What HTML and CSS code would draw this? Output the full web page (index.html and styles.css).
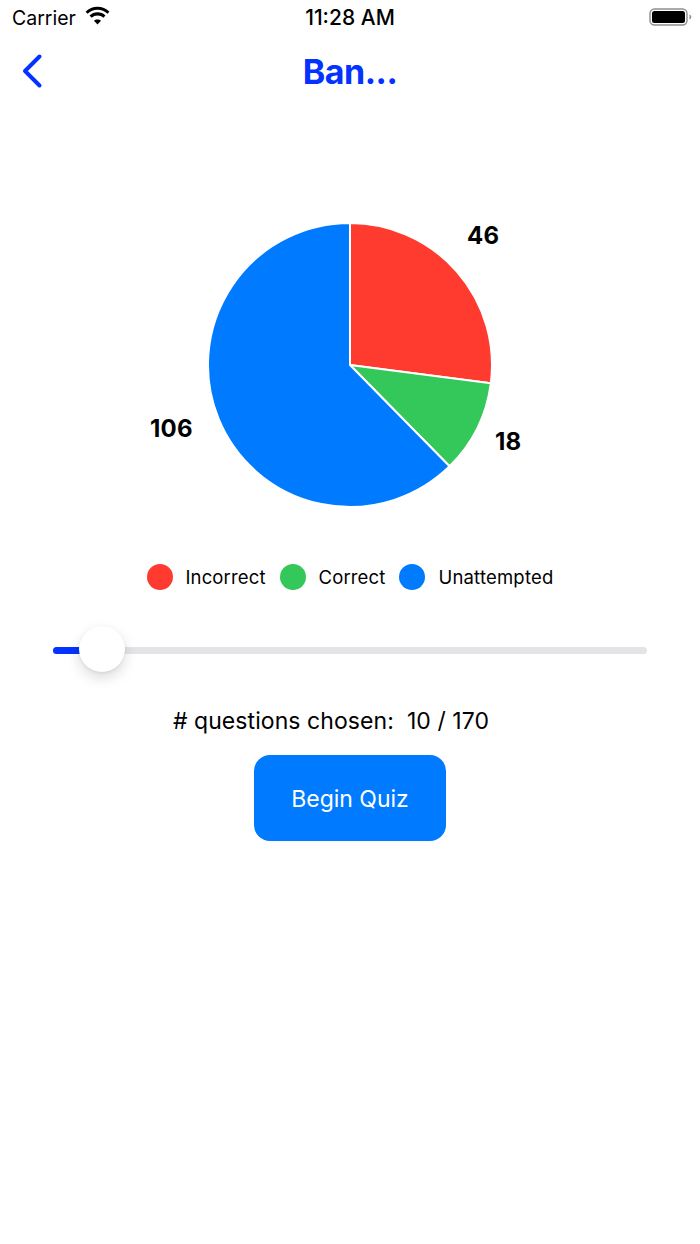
FILE: index.html
```html
<!DOCTYPE html>
<html lang="en">
<head>
<meta charset="utf-8">
<title>Quiz</title>
<link rel="stylesheet" href="styles.css">
</head>
<body>
<div class="screen">
  <header class="status">
    <div class="status-left">
      <span class="carrier">Carrier</span>
      <svg class="wifi" width="26" height="19" viewBox="0 0 26 19"><path d="M13 3.600c3.700 0 7 1.400 9.500 3.800l2-2.100A16.600 16.600 0 0 0 13 .6 16.600 16.600 0 0 0 1.500 5.300l2 2.100A13.700 13.700 0 0 1 13 3.600z"/><path d="M13 9.100c2.200 0 4.100.8 5.600 2.100l2.100-2.200A11.300 11.300 0 0 0 13 5.900c-3 0-5.700 1.200-7.700 3.100l2.100 2.200A8.400 8.400 0 0 1 13 9.100z"/><path d="M13 12.800c-1.300 0-2.500.5-3.400 1.300l3.400 3.700 3.400-3.700c-.9-.8-2.100-1.300-3.400-1.300z"/></svg>
    </div>
    <span class="clock">11:28 AM</span>
    <svg class="battery" width="44" height="20" viewBox="0 0 44 20"><rect x="1" y="2" width="37" height="16" rx="4.500" fill="none" stroke="#8e8e8e" stroke-width="1.400"/><rect x="3" y="4" width="33" height="12" rx="2.500"/><path d="M40.500 7.500c1.300.4 1.800 1.400 1.800 2.500s-.5 2.100-1.800 2.500z" fill="#8e8e8e"/></svg>
  </header>

  <nav class="navbar">
    <svg class="back" width="24" height="36" viewBox="0 0 24 36"><path d="M20.500 3.500 6 18l14.500 14.500" fill="none" stroke="#0433ff" stroke-width="4" stroke-linecap="round" stroke-linejoin="round"/></svg>
    <h1 class="title">Ban...</h1>
  </nav>

  <section class="chart">
    <svg class="pie" width="288" height="288" viewBox="-144 -144 288 288">
      <g stroke="#fff" stroke-width="2" stroke-linejoin="round">
        <path fill="#ff3b30" d="M0 0V-142A142 142 0 0 1 140.800 18.300Z"/>
        <path fill="#34c759" d="M0 0L140.800 18.300A142 142 0 0 1 99.500 101.300Z"/>
        <path fill="#007aff" d="M0 0L99.500 101.300A142 142 0 1 1 0 -142Z"/>
      </g>
    </svg>
    <span class="count count-red">46</span>
    <span class="count count-green">18</span>
    <span class="count count-blue">106</span>
  </section>

  <ul class="legend">
    <li class="legend-item"><span class="dot dot-red"></span>Incorrect</li>
    <li class="legend-item"><span class="dot dot-green"></span>Correct</li>
    <li class="legend-item"><span class="dot dot-blue"></span>Unattempted</li>
  </ul>

  <div class="slider">
    <div class="track"><div class="fill"></div></div>
    <div class="thumb"></div>
  </div>

  <p class="chosen">#&nbsp;questions chosen:&nbsp; 10 / 170</p>

  <button class="begin">Begin Quiz</button>
</div>
</body>
</html>
```
FILE: styles.css
```css
* { box-sizing: border-box; }
html, body { margin: 0; padding: 0; background: #fff; }
body { font-family: Inter, "Liberation Sans", sans-serif; color: #000; }
.screen { width: 700px; height: 1244px; display: flex; flex-direction: column; align-items: center; overflow: hidden; }

.status { width: 100%; height: 36px; display: grid; grid-template-columns: 1fr auto 1fr; align-items: center; padding: 0 7px 0 7px; }
.status-left { display: flex; align-items: center; gap: 8px; padding-left: 5px; }
.carrier { font-size: 19.500px; line-height: 36px; }
.wifi { margin-top: -5px; width: 27px; height: 20px; }
.clock { font-size: 21px; font-weight: 500; line-height: 36px; }
.battery { justify-self: end; margin-top: -2px; }

.navbar { width: 100%; height: 70px; position: relative; display: flex; justify-content: center; align-items: center; }
.back { position: absolute; left: 19px; top: 17px; }
.title { margin: 0; font-size: 34px; font-weight: 700; color: #0433ff; letter-spacing: -0.5px; }

.chart { position: relative; width: 400px; height: 288px; margin-top: 115px; display: flex; justify-content: center; }
.count { position: absolute; font-size: 24px; font-weight: 700; line-height: 30px; letter-spacing: .2px; }
.count-red { left: 317px; top: 0; }
.count-green { left: 345px; top: 206px; }
.count-blue { left: 0; top: 193px; }

.legend { list-style: none; margin: 55px 0 0; padding: 0; display: flex; gap: 14px; }
.legend-item { display: flex; align-items: center; gap: 13px; font-size: 18.500px; line-height: 26px; letter-spacing: .13px; }
.legend-item:last-child { letter-spacing: .2px; }
.dot { width: 26px; height: 26px; border-radius: 50%; }
.dot-red { background: #ff3b30; }
.dot-green { background: #34c759; }
.dot-blue { background: #007aff; }

.slider { position: relative; width: 594px; height: 46px; margin-top: 36px; display: flex; align-items: center; }
.track { width: 100%; height: 7px; margin-top: 3px; border-radius: 4px; background: #e4e4e6; overflow: hidden; }
.fill { width: 38px; height: 100%; background: #0433ff; }
.thumb { position: absolute; left: 26px; top: 0; width: 46px; height: 46px; border-radius: 50%; background: #fff; box-shadow: 0 6px 14px rgba(0,0,0,.14), 0 1px 3px rgba(0,0,0,.08); }

.chosen { margin: 34px 0 0 -38px; font-size: 23px; line-height: 30px; letter-spacing: .07px; }

.begin { margin-top: 19px; padding-top: 2px; width: 192px; height: 86px; border: 0; border-radius: 16px; background: #007aff; color: #fff; font: 400 23px Inter, "Liberation Sans", sans-serif; }
```
